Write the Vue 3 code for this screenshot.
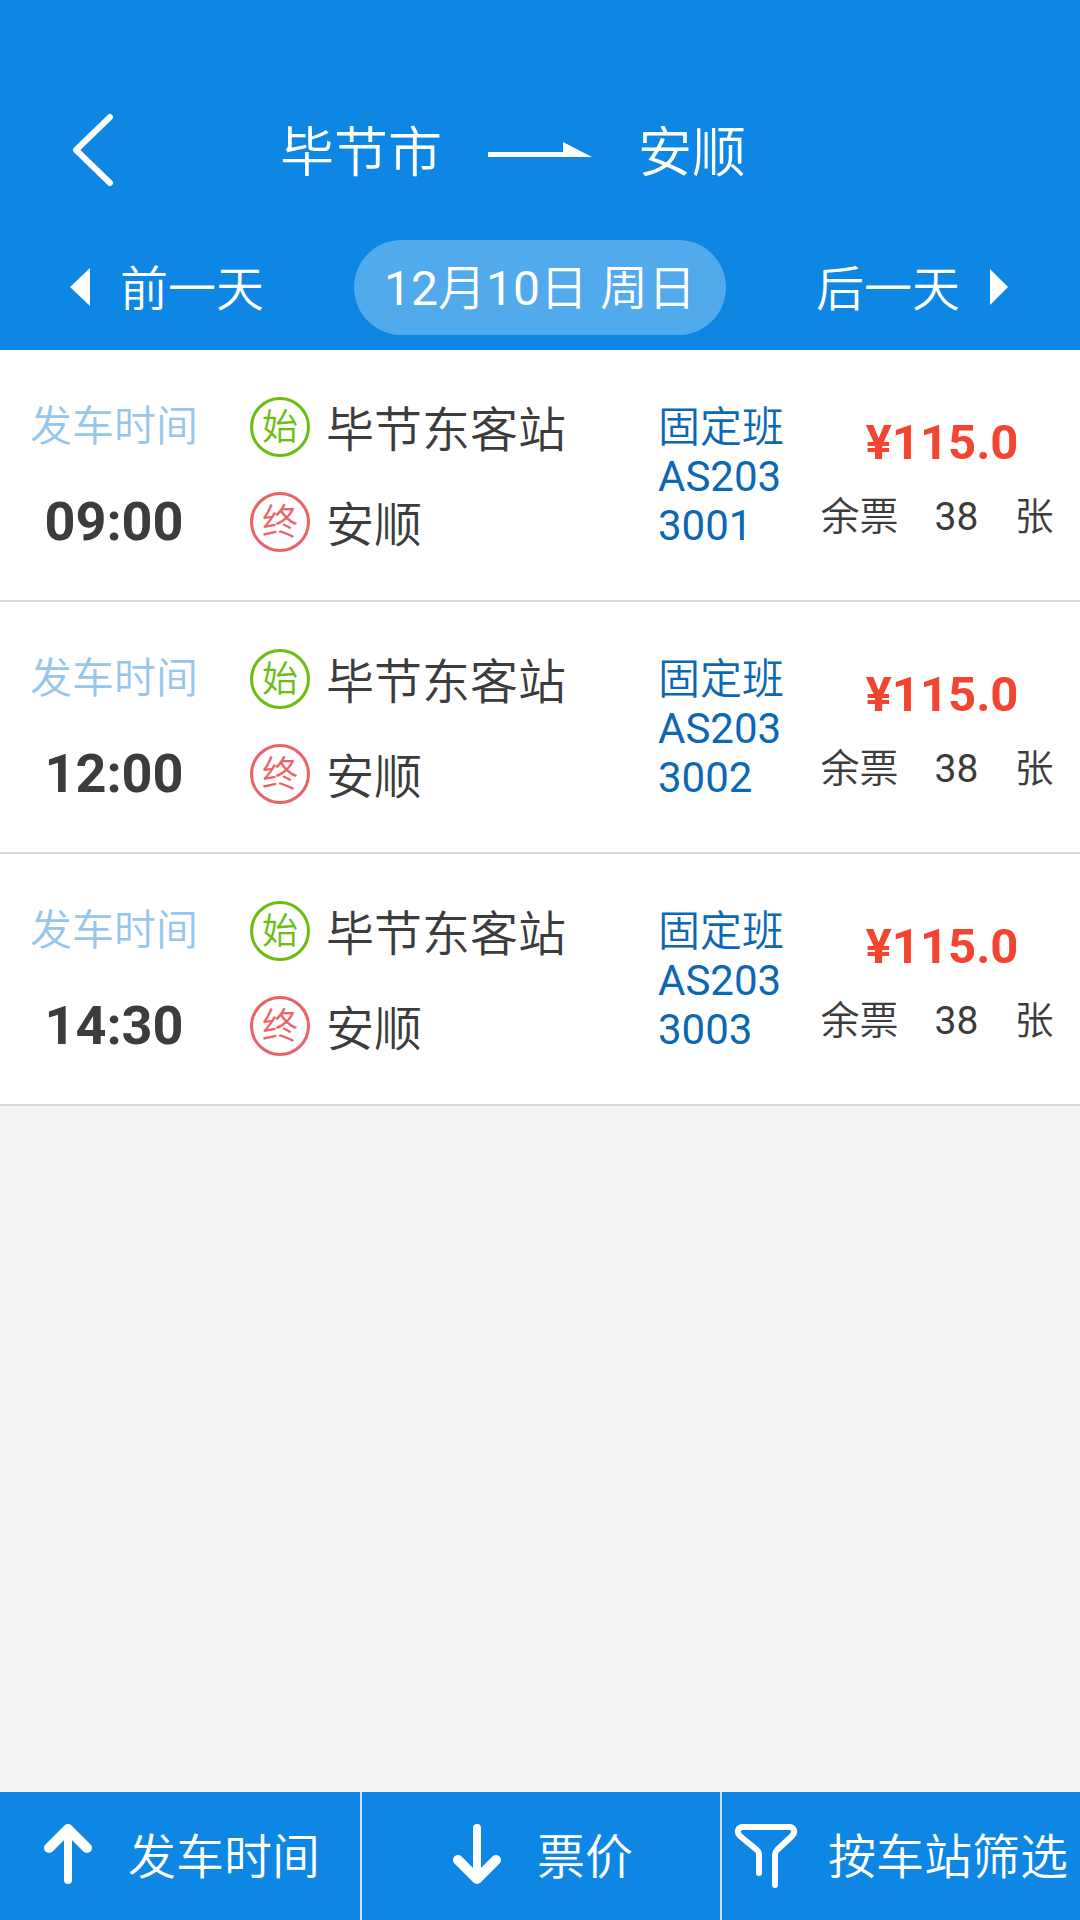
<script setup>
const trips = [
  { time: '09:00', from: '毕节东客站', to: '安顺', code: '固定班AS2033001', price: '¥115.0', left: 38 },
  { time: '12:00', from: '毕节东客站', to: '安顺', code: '固定班AS2033002', price: '¥115.0', left: 38 },
  { time: '14:30', from: '毕节东客站', to: '安顺', code: '固定班AS2033003', price: '¥115.0', left: 38 },
]
</script>

<template>
  <div class="page">
    <header class="header">
      <div class="title">
        <button class="back" type="button" aria-label="返回">
          <svg width="42" height="76" viewBox="0 0 42 76" fill="none" stroke="currentColor" stroke-width="6" stroke-linecap="round" stroke-linejoin="round">
            <path d="M38 5 4 38 38 71" />
          </svg>
        </button>
        <h1 class="route">
          <span class="text">毕节市</span>
          <svg width="104" height="16" viewBox="0 0 104 16" fill="currentColor" aria-hidden="true">
            <path d="M0 10H75V0L104 15H0Z" />
          </svg>
          <span class="text">安顺</span>
        </h1>
      </div>
      <nav class="days">
        <button class="day" type="button">
          <svg width="20" height="40" viewBox="0 0 20 40" fill="currentColor" aria-hidden="true"><path d="M20 0V38L0 19Z" /></svg>
          <span class="text">前一天</span>
        </button>
        <button class="date" type="button">12月10日 周日</button>
        <button class="day next" type="button">
          <span class="text">后一天</span>
          <svg width="20" height="40" viewBox="0 0 20 40" fill="currentColor" aria-hidden="true"><path d="M0 1V37L18 19Z" /></svg>
        </button>
      </nav>
    </header>

    <main class="main">
      <ul class="trips">
        <li v-for="trip in trips" :key="trip.time" class="trip">
          <div class="depart">
            <span class="label">发车时间</span>
            <time class="time">{{ trip.time }}</time>
          </div>
          <div class="stops">
            <div class="stop"><span class="badge start">始</span><span class="text">{{ trip.from }}</span></div>
            <div class="stop"><span class="badge end">终</span><span class="text">{{ trip.to }}</span></div>
          </div>
          <div class="code">{{ trip.code }}</div>
          <div class="fare">
            <strong class="price">{{ trip.price }}</strong>
            <div class="left"><span>余票</span><span>{{ trip.left }}</span><span>张</span></div>
          </div>
        </li>
      </ul>
    </main>

    <footer class="tools">
      <button class="tool" type="button">
        <svg width="64" height="64" viewBox="0 0 64 64" fill="none" stroke="currentColor" stroke-linecap="round" stroke-linejoin="round" aria-hidden="true">
          <path d="M32 8V59" stroke-width="8" />
          <path d="M13 27 32 8 51 27" stroke-width="10" />
        </svg>
        发车时间
      </button>
      <button class="tool" type="button">
        <svg width="64" height="64" viewBox="0 0 64 64" fill="none" stroke="currentColor" stroke-linecap="round" stroke-linejoin="round" aria-hidden="true">
          <path d="M32 7V55" stroke-width="8" />
          <path d="M13 39 32 58 51 39" stroke-width="10" />
        </svg>
        票价
      </button>
      <button class="tool filter" type="button">
        <svg width="64" height="70" viewBox="0 0 64 70" fill="none" stroke="currentColor" stroke-width="6" stroke-linecap="round" stroke-linejoin="round" aria-hidden="true">
          <path d="M25 55V36C25 34 24 33 23 32L6 18C2 14 4 9 9 9H55C60 9 62 14 58 18L43 32C42 33 41 35 41 37V67" />
        </svg>
        按车站筛选
      </button>
    </footer>
  </div>
</template>

<style>
body {
  background: #f4f4f4;
}
</style>

<style scoped>
.page {
  display: flex;
  flex-direction: column;
  min-height: 100vh;
  font-family: Roboto, "Noto Sans CJK SC DemiLight", "Noto Sans CJK SC", sans-serif;
  color: #3c3c3c;
  background: #f4f4f4;
}

button {
  margin: 0;
  padding: 0;
  border: 0;
  background: none;
  color: inherit;
  font: inherit;
  cursor: pointer;
}

svg {
  display: block;
  flex: none;
}

.text {
  padding-top: 8px;
}

.header {
  padding: 90px 70px 15px;
  background: #0e86e4;
  color: #fff;
}

.title {
  display: flex;
  align-items: center;
  gap: 166px;
  height: 120px;
  margin-bottom: 30px;
  padding-left: 2px;
}

.route {
  display: flex;
  align-items: center;
  gap: 46px;
  margin: 0;
  font-size: 54px;
  font-weight: 400;
  line-height: 64px;
}

.days {
  display: grid;
  grid-template-columns: 1fr auto 1fr;
  align-items: center;
  font-size: 48px;
  line-height: 60px;
}

.day {
  display: flex;
  align-items: center;
  gap: 30px;
}

.day .text {
  padding-top: 4px;
}

.next {
  justify-self: end;
}

.date {
  padding: 19px 30px 16px;
  border-radius: 48px;
  background: #50aaeb;
}

.main {
  flex: 1;
}

.trips {
  margin: 0;
  padding: 0;
  list-style: none;
}

.trip {
  display: grid;
  grid-template-columns: 228px 1fr 136px 288px;
  padding: 43px 0 44px;
  border-bottom: 2px solid #d8d8d8;
  background: #fff;
}

.depart {
  display: flex;
  flex-direction: column;
  align-items: center;
  gap: 33px;
  padding-top: 4px;
}

.label {
  color: #96c6ec;
  font-size: 42px;
  font-weight: 300;
  line-height: 60px;
}

.time {
  font-size: 54px;
  font-weight: 700;
  line-height: 64px;
}

.stops {
  display: flex;
  flex-direction: column;
  gap: 27px;
  padding-left: 22px;
}

.stop {
  display: flex;
  align-items: center;
  gap: 16px;
  font-size: 48px;
  line-height: 60px;
}

.badge {
  box-sizing: border-box;
  width: 60px;
  height: 60px;
  border: 3px solid;
  border-radius: 50%;
  font-size: 36px;
  line-height: 56px;
  text-align: center;
}

.start {
  color: #6cbd10;
}

.end {
  color: #ea6368;
}

.code {
  padding: 10px 4px 0 2px;
  color: #0c68b2;
  font-size: 42px;
  line-height: 49px;
  word-break: break-all;
}

.fare {
  display: flex;
  flex-direction: column;
  align-items: center;
  gap: 16px;
  padding: 22px 0 0 12px;
}

.price {
  color: #f2442f;
  font-size: 49px;
  line-height: 56px;
}

.left {
  display: flex;
  gap: 36px;
  padding-right: 10px;
  font-size: 39px;
  line-height: 60px;
}

.tools {
  display: grid;
  grid-template-columns: repeat(3, 1fr);
  background: #0e86e4;
  color: #fff;
}

.tool {
  display: flex;
  align-items: center;
  justify-content: center;
  gap: 28px;
  height: 128px;
  padding: 0 4px 6px 0;
  font-size: 48px;
}

.filter {
  gap: 30px;
  padding-right: 0;
}

.tool + .tool {
  border-left: 2px solid #cfe3ee;
}
</style>
